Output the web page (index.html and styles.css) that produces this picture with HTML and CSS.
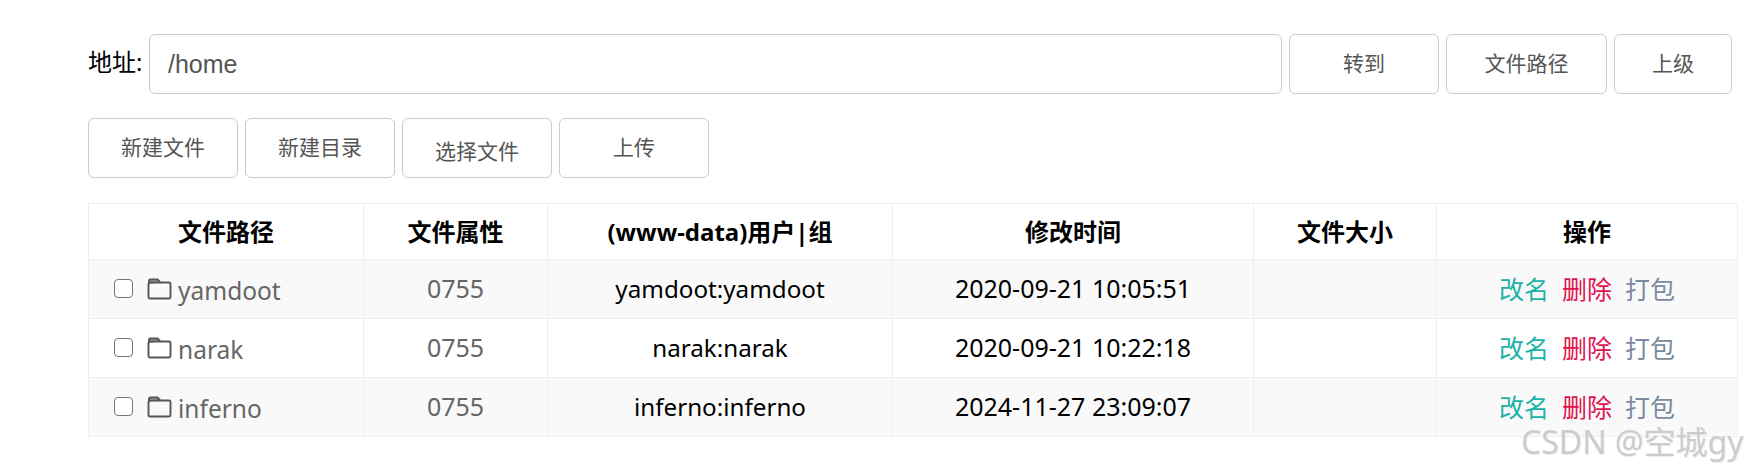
FILE: index.html
```html
<!DOCTYPE html>
<html lang="zh-CN">
<head>
    <meta charset="UTF-8">
    <title>文件管理</title>
    <link rel="stylesheet" href="styles.css">
</head>
<body>
    <div class="address-row">
        <label class="address-label" for="path">地址:</label>
        <input class="address-input" id="path" type="text" value="/home">
        <button class="btn btn-go">转到</button>
        <button class="btn btn-path">文件路径</button>
        <button class="btn btn-up">上级</button>
    </div>
    <div class="action-row">
        <button class="btn">新建文件</button>
        <button class="btn">新建目录</button>
        <button class="btn btn-low">选择文件</button>
        <button class="btn">上传</button>
    </div>
    <table class="file-table">
        <thead>
            <tr>
                <th class="col-path">文件路径</th>
                <th class="col-attr">文件属性</th>
                <th class="col-owner">(www-data)用户|组</th>
                <th class="col-time">修改时间</th>
                <th class="col-size">文件大小</th>
                <th class="col-ops">操作</th>
            </tr>
        </thead>
        <tbody>
            <tr>
                <td class="name-cell">
                    <div class="name-wrap">
                        <span class="check"></span>
                        <svg class="folder" viewBox="0 0 24 22"><path class="folder-tab" d="M1.500 6V3Q1.500 1.500 3 1.500H10L12.500 4"/><path d="M1 19V6Q1 4.500 2.500 4.500H21.500Q23 4.500 23 6V19Q23 20.500 21.500 20.500H2.500Q1 20.500 1 19Z"/></svg>
                        <span class="name-text">yamdoot</span>
                    </div>
                </td>
                <td class="muted">0755</td>
                <td class="owner">yamdoot:yamdoot</td>
                <td>2020-09-21 10:05:51</td>
                <td></td>
                <td><span class="op op-rename">改名</span><span class="op op-delete">删除</span><span class="op op-pack">打包</span></td>
            </tr>
            <tr>
                <td class="name-cell">
                    <div class="name-wrap">
                        <span class="check"></span>
                        <svg class="folder" viewBox="0 0 24 22"><path class="folder-tab" d="M1.500 6V3Q1.500 1.500 3 1.500H10L12.500 4"/><path d="M1 19V6Q1 4.500 2.500 4.500H21.500Q23 4.500 23 6V19Q23 20.500 21.500 20.500H2.500Q1 20.500 1 19Z"/></svg>
                        <span class="name-text">narak</span>
                    </div>
                </td>
                <td class="muted">0755</td>
                <td class="owner">narak:narak</td>
                <td>2020-09-21 10:22:18</td>
                <td></td>
                <td><span class="op op-rename">改名</span><span class="op op-delete">删除</span><span class="op op-pack">打包</span></td>
            </tr>
            <tr>
                <td class="name-cell">
                    <div class="name-wrap">
                        <span class="check"></span>
                        <svg class="folder" viewBox="0 0 24 22"><path class="folder-tab" d="M1.500 6V3Q1.500 1.500 3 1.500H10L12.500 4"/><path d="M1 19V6Q1 4.500 2.500 4.500H21.500Q23 4.500 23 6V19Q23 20.500 21.500 20.500H2.500Q1 20.500 1 19Z"/></svg>
                        <span class="name-text">inferno</span>
                    </div>
                </td>
                <td class="muted">0755</td>
                <td class="owner">inferno:inferno</td>
                <td>2024-11-27 23:09:07</td>
                <td></td>
                <td><span class="op op-rename">改名</span><span class="op op-delete">删除</span><span class="op op-pack">打包</span></td>
            </tr>
        </tbody>
    </table>
    <div class="watermark">CSDN @空城gy</div>
</body>
</html>
```

FILE: styles.css
```css
body {
    margin: 0;
    padding: 34px 10px 0 88px;
    background-color: #fff;
    color: #000;
    font-family: "Noto Sans", "Noto Sans CJK SC", sans-serif;
    font-size: 25px;
    overflow: hidden;
}
.address-row {
    display: flex;
    align-items: stretch;
    gap: 7px;
    height: 60px;
}
.address-label {
    align-self: center;
    width: 54px;
    margin-top: -7px;
    font-size: 24px;
    white-space: nowrap;
}
.address-input {
    width: 1133px;
    box-sizing: border-box;
    padding: 0 18px;
    border: 1px solid #ccc;
    border-radius: 6px;
    color: #555;
    font-family: "Liberation Sans", Arial, sans-serif;
    font-size: 25px;
    outline: none;
}
.btn {
    width: 150px;
    height: 60px;
    box-sizing: border-box;
    padding: 0 0 4px;
    border: 1px solid #ccc;
    border-radius: 6px;
    background-color: #fff;
    color: #555;
    font-family: "Noto Sans CJK SC", sans-serif;
    font-size: 21px;
}
.btn-path {
    width: 161px;
}
.btn-up {
    width: 118px;
}
.btn-low {
    padding: 4px 0 0;
}
.action-row {
    display: flex;
    gap: 7px;
    margin-top: 24px;
}
.file-table {
    width: 1649px;
    margin-top: 25px;
    border-collapse: collapse;
    table-layout: fixed;
    text-align: center;
}
.file-table th, .file-table td {
    padding: 0 0 2px;
    border: 1px solid #eee;
}
.file-table th {
    height: 53px;
    font-size: 24px;
    font-weight: 700;
}
.file-table td {
    height: 56px;
}
.file-table tbody tr:nth-child(odd) {
    background-color: #f9f9f9;
}
.col-path { width: 274px; }
.col-attr { width: 183px; }
.col-owner { width: 344px; }
.col-time { width: 360px; }
.col-size { width: 182px; }
.col-ops { width: 300px; }
.file-table .owner {
    font-size: 24.200px;
}
.name-cell {
    text-align: left;
}
.name-wrap {
    display: flex;
    align-items: center;
    padding-left: 25px;
    color: #666;
    font-size: 24.500px;
}
.name-text {
    margin-top: 4px;
}
.check {
    width: 19px;
    height: 19px;
    box-sizing: border-box;
    margin-right: 14px;
    border: 1.500px solid #767676;
    border-radius: 4px;
    background-color: #fff;
}
.folder {
    width: 25px;
    height: 22px;
    margin-top: 2px;
    margin-right: 6px;
    fill: none;
    stroke: #555;
    stroke-width: 1.900;
}
.folder-tab {
    fill: #aaa;
}
.muted {
    color: #666;
}
.op {
    margin: 0 6.500px;
}
.op-rename { color: #1ab3a6; }
.op-delete { color: #e0134f; }
.op-pack { color: #7a8b9f; }
.watermark {
    position: absolute;
    left: 1521px;
    top: 426px;
    color: #ccc;
    font-size: 32px;
    line-height: 1;
    white-space: nowrap;
    text-shadow: 1px 1px 1px #eee;
}
```
